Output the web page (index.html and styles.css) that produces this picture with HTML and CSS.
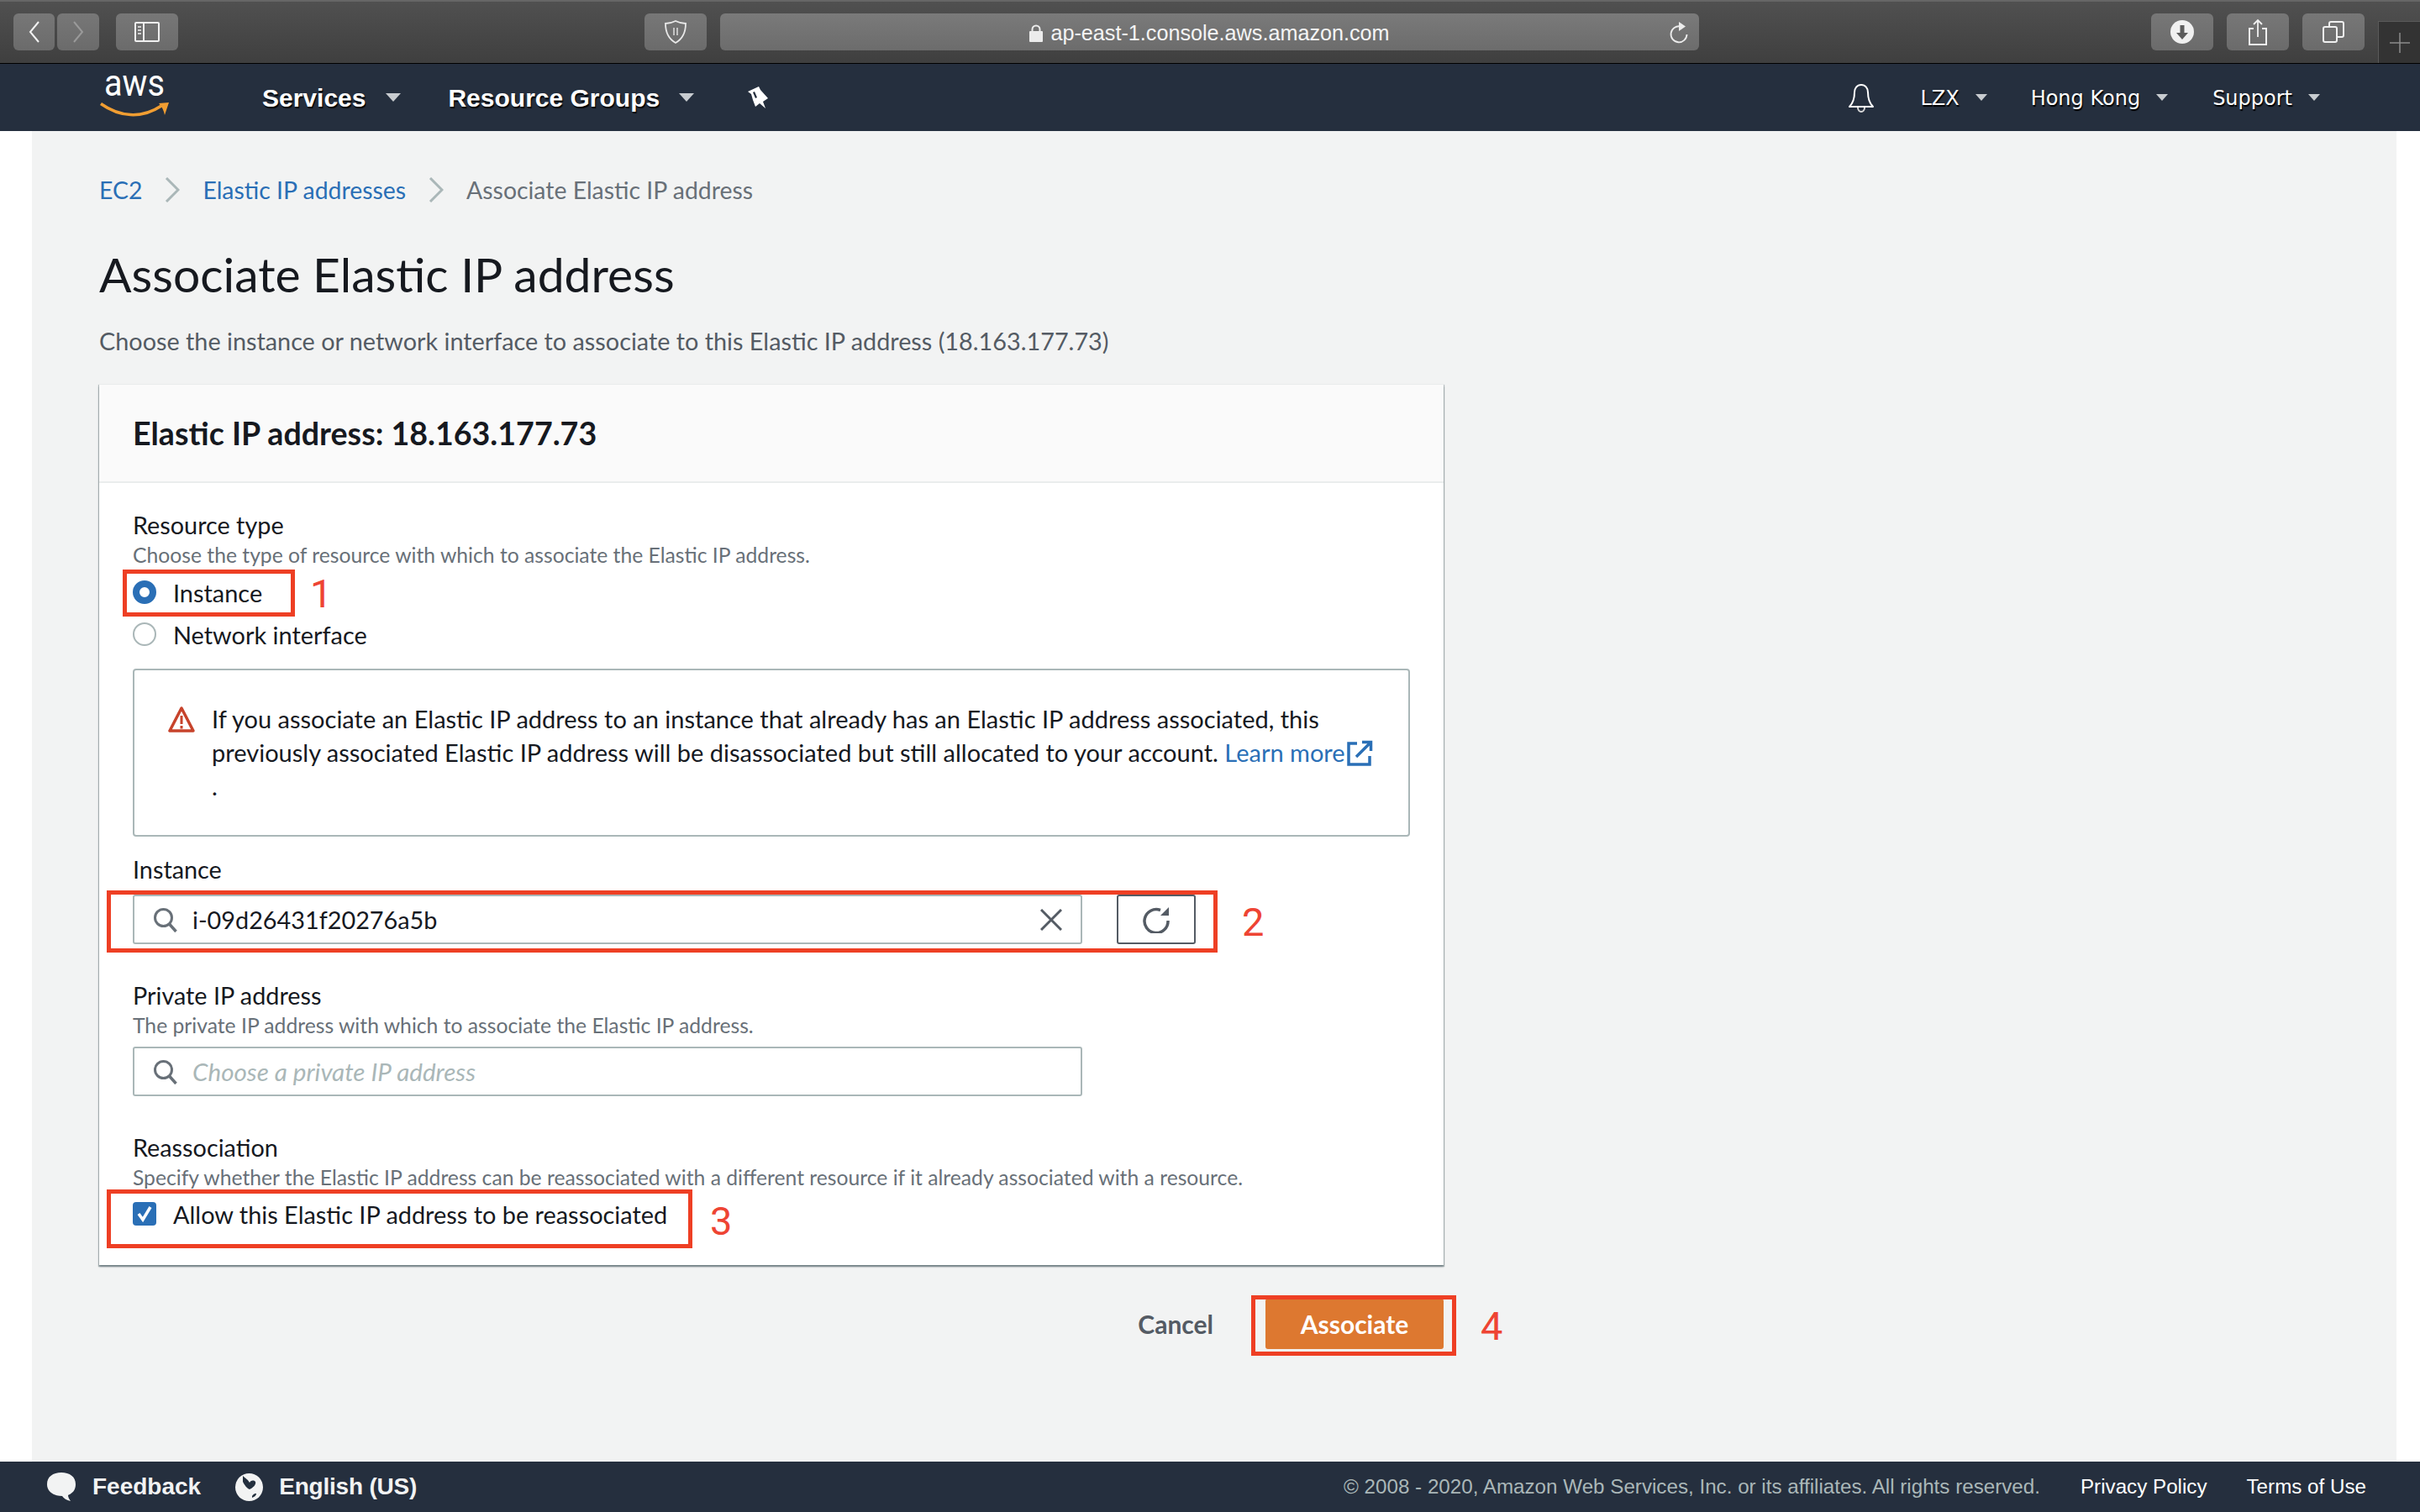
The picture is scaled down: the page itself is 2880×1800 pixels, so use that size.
FILE: index.html
```html
<!DOCTYPE html>
<html lang="en">
<head>
<meta charset="utf-8">
<title>Associate Elastic IP address</title>
<link rel="stylesheet" href="styles.css">
</head>
<body>
<div class="page">
  <header class="chrome">
    <div class="tb back"><svg width="14" height="28" viewBox="0 0 14 28"><path d="M12 2 2 14l10 12" fill="none" stroke="#f2f2f2" stroke-width="2"/></svg></div>
    <div class="tb fwd"><svg width="14" height="28" viewBox="0 0 14 28"><path d="M2 2l10 12L2 26" fill="none" stroke="#9a9a9a" stroke-width="2"/></svg></div>
    <div class="tb side"><svg width="30" height="24" viewBox="0 0 30 24"><rect x="1" y="1" width="28" height="22" rx="1" fill="none" stroke="#f0f0f0" stroke-width="2"/><path d="M11 1v22" stroke="#f0f0f0" stroke-width="2"/><path d="M4 6h4M4 10h4M4 14h4" stroke="#d0d0d0" stroke-width="2"/></svg></div>
    <div class="tb shield"><svg width="30" height="30" viewBox="0 0 30 30"><path d="M15 2c4 2 8 3 12 3 0 10-3 18-12 23C6 23 3 15 3 5c4 0 8-1 12-3z" fill="none" stroke="#e8e8e8" stroke-width="1.8"/><path d="M13 10v9M17 10v9" stroke="#d8d8d8" stroke-width="1.6"/></svg></div>
    <div class="url">
      <span></span>
      <span class="url-text"><svg class="lock" width="16" height="21" viewBox="0 0 16 21"><path d="M3.500 9V6a4.500 4.500 0 0 1 9 0v3" fill="none" stroke="#ececec" stroke-width="2"/><rect y="8" width="16" height="13" rx="1" fill="#ececec"/></svg>ap-east-1.console.aws.amazon.com</span>
      <svg class="reload" width="24" height="26" viewBox="0 0 24 26"><path d="M14 5.500A9.500 9.500 0 1 0 21.500 15" fill="none" stroke="#ececec" stroke-width="1.800"/><path d="M12 0l8 5.500-8 5.500z" fill="#ececec"/></svg>
    </div>
    <div class="tb right first"><svg width="28" height="28" viewBox="0 0 28 28"><circle cx="14" cy="14" r="14" fill="#f0f0f0"/><path d="M11.500 6h5v9h4.500L14 23l-7-8h4.500z" fill="#5c5c5c"/></svg></div>
    <div class="tb right"><svg width="24" height="32" viewBox="0 0 24 32"><path d="M7 12H2v19h20V12h-5" fill="none" stroke="#f0f0f0" stroke-width="2"/><path d="M12 22V2M7 7l5-5 5 5" fill="none" stroke="#f0f0f0" stroke-width="1.800"/></svg></div>
    <div class="tb right"><svg width="26" height="26" viewBox="0 0 26 26"><rect x="1" y="7" width="16" height="18" rx="2" fill="none" stroke="#f0f0f0" stroke-width="2"/><path d="M8 7V3a2 2 0 0 1 2-2h13a2 2 0 0 1 2 2v14a2 2 0 0 1-2 2h-6" fill="none" stroke="#f0f0f0" stroke-width="2"/></svg></div>
    <div class="newtab"><svg width="24" height="24" viewBox="0 0 24 24"><path d="M12 0v24M0 12h24" stroke="#8c8c8c" stroke-width="1.500"/></svg></div>
  </header>

  <nav class="nav">
    <svg class="logo" width="80" height="48" viewBox="0 0 80 48">
      <text class="logo-text" x="4" y="22" textLength="72" lengthAdjust="spacingAndGlyphs">aws</text>
      <path d="M0 31.500C22 47 48 50 72 34" fill="none" stroke="#f19e32" stroke-width="3.500"/>
      <path d="M69 31l12-1-5 15c-1-5-3-10-7-14z" fill="#f19e32"/>
    </svg>
    <a class="nav-bold services">Services</a><i class="caret c1"></i>
    <a class="nav-bold groups">Resource Groups</a><i class="caret c2"></i>
    <svg class="pin" width="24" height="28" viewBox="0 0 24 28"><path fill-rule="evenodd" d="M0 7 13 1l2 4 9 10-6 4 3 8-7-6-5 4-3-8-2-7zM6 8l3 7 2-1-3-7z" fill="#fff"/></svg>
    <div class="nav-right">
      <svg class="bell" width="32" height="35" viewBox="0 0 32 35"><path d="M16 2c-5 0-8 4-8 9 0 7-1 12-6 17h28c-5-5-6-10-6-17 0-5-3-9-8-9z" fill="none" stroke="#fff" stroke-width="2" stroke-linejoin="round"/><path d="M12 29c0 3 2 5 4 5s4-2 4-5" fill="none" stroke="#d8d8d8" stroke-width="2"/></svg>
      <a class="nav-reg lzx">LZX</a><i class="caret small"></i>
      <a class="nav-reg hk">Hong Kong</a><i class="caret small"></i>
      <a class="nav-reg support">Support</a><i class="caret small"></i>
    </div>
  </nav>

  <main class="main">
    <div class="crumbs">
      <a class="link">EC2</a>
      <svg class="chev" width="18" height="30" viewBox="0 0 18 30"><path d="M2 1l14 14L2 29" fill="none" stroke="#aab7b8" stroke-width="3"/></svg>
      <a class="link">Elastic IP addresses</a>
      <svg class="chev" width="18" height="30" viewBox="0 0 18 30"><path d="M2 1l14 14L2 29" fill="none" stroke="#aab7b8" stroke-width="3"/></svg>
      <span class="crumb-current">Associate Elastic IP address</span>
    </div>
    <h1 class="title">Associate Elastic IP address</h1>
    <p class="subtitle">Choose the instance or network interface to associate to this Elastic IP address (18.163.177.73)</p>

    <section class="card">
      <h2 class="card-head">Elastic IP address: 18.163.177.73</h2>
      <div class="card-body">
        <div class="label">Resource type</div>
        <div class="desc">Choose the type of resource with which to associate the Elastic IP address.</div>
        <div class="choices">
          <div class="choice"><span class="radio on"></span>Instance</div>
          <div class="choice"><span class="radio"></span>Network interface</div>
        </div>
        <div class="alert">
          <svg class="warn" width="32" height="32" viewBox="0 0 32 32"><path d="M16 3 2 30h28z" fill="none" stroke="#c7432b" stroke-width="3.500" stroke-linejoin="round"/><path d="M16 12v10M16 24v3.500" stroke="#c7432b" stroke-width="3"/></svg>
          <p class="alert-text">If you associate an Elastic IP address to an instance that already has an Elastic IP address associated, this<br>previously associated Elastic IP address will be disassociated but still allocated to your account. <a class="link">Learn more</a><svg class="ext" width="32" height="32" viewBox="0 0 32 32"><path d="M13 4H3v25h25V19" fill="none" stroke="#2a6fb6" stroke-width="3.500"/><path d="M12 20 29 3M19 2.500h10.500V13" fill="none" stroke="#2a6fb6" stroke-width="3.500"/></svg><br>.</p>
        </div>

        <div class="label gap-a">Instance</div>
        <div class="input-row">
          <div class="input">
            <svg class="search" width="30" height="30" viewBox="0 0 30 30"><circle cx="12.500" cy="12.500" r="10" fill="none" stroke="#687078" stroke-width="3"/><path d="M19.500 20l8 9" stroke="#687078" stroke-width="3.500"/></svg>
            <span class="value">i-09d26431f20276a5b</span>
            <svg class="clear" width="26" height="26" viewBox="0 0 26 26"><path d="M1 1l24 24M25 1 1 25" stroke="#545b64" stroke-width="3"/></svg>
          </div>
          <div class="refresh"><svg width="32" height="32" viewBox="0 0 32 32"><path d="M21 4.500A14 14 0 1 0 30 17" fill="none" stroke="#545b64" stroke-width="3.500"/><path d="M31 1v10H21z" fill="#545b64"/></svg></div>
        </div>

        <div class="label gap-c">Private IP address</div>
        <div class="desc">The private IP address with which to associate the Elastic IP address.</div>
        <div class="input private">
          <svg class="search" width="30" height="30" viewBox="0 0 30 30"><circle cx="12.500" cy="12.500" r="10" fill="none" stroke="#687078" stroke-width="3"/><path d="M19.500 20l8 9" stroke="#687078" stroke-width="3.500"/></svg>
          <span class="placeholder">Choose a private IP address</span>
        </div>

        <div class="label gap-b">Reassociation</div>
        <div class="desc">Specify whether the Elastic IP address can be reassociated with a different resource if it already associated with a resource.</div>
        <div class="choice check-row"><span class="check"><svg width="20" height="20" viewBox="0 0 20 20"><path d="M3 10l5 7L17 2" fill="none" stroke="#fff" stroke-width="3.500"/></svg></span>Allow this Elastic IP address to be reassociated</div>
      </div>
    </section>

    <div class="actions">
      <a class="cancel">Cancel</a>
      <a class="primary">Associate</a>
    </div>
  </main>

  <footer class="footer">
    <svg class="fb-icon" width="34" height="34" viewBox="0 0 34 34"><path d="M17 0c10 0 17 5 17 14 0 7-4 11-9 13 0 2 1 4 3 7-5-1-8-3-10-6C8 28 0 23 0 14 0 5 7 0 17 0z" fill="#f2f3f3"/></svg>
    <span class="foot-bold feedback">Feedback</span>
    <svg class="globe" width="33" height="33" viewBox="0 0 33 33"><circle cx="16.500" cy="16.500" r="16.500" fill="#f2f3f3"/><path d="M9 3c3 3 6 4 8 8 2-3 5-3 7-1 1 3-2 6-5 8l-2 1c-3-1-6-5-8-9z" fill="#232f3e"/><path d="M20 27c1-2 3-3 5-3 0 2-2 4-5 5z" fill="#232f3e"/></svg>
    <span class="foot-bold english">English (US)</span>
    <span class="copy">© 2008 - 2020, Amazon Web Services, Inc. or its affiliates. All rights reserved.</span>
    <a class="foot-link privacy">Privacy Policy</a>
    <a class="foot-link terms">Terms of Use</a>
  </footer>

  <div class="mark m1"></div><span class="num n1">1</span>
  <div class="mark m2"></div><span class="num n2">2</span>
  <div class="mark m3"></div><span class="num n3">3</span>
  <div class="mark m4"></div><span class="num n4">4</span>
</div>
</body>
</html>
```

FILE: styles.css
```css
* { box-sizing: border-box; }
html, body { margin: 0; padding: 0; }
body { background: #fff; font-family: "Lato", "Noto Sans", sans-serif; color: #16191f; }
.page { position: relative; width: 2880px; height: 1800px; overflow: hidden; display: flex; flex-direction: column; }

/* browser toolbar */
.chrome { height: 76px; flex: none; display: flex; align-items: flex-start; padding: 14px 0 0 16px; position: relative;
  background: linear-gradient(#505050, #3f3f3f); border-top: 2px solid #666; border-bottom: 1px solid #000; }
.tb { height: 44px; border-radius: 6px; background: linear-gradient(#777, #6b6b6b); display: flex; align-items: center; justify-content: center; flex: none; }
.back { width: 49px; margin-right: 3px; }
.fwd { width: 50px; margin-right: 20px; }
.side { width: 74px; margin-right: 555px; }
.shield { width: 74px; margin-right: 16px; }
.url { width: 1165px; height: 44px; border-radius: 6px; background: linear-gradient(#7a7a7a, #6c6c6c); display: grid; grid-template-columns: 1fr auto 1fr; align-items: center; margin-right: 538px; flex: none; }
.url-text { font: 25.200px/44px "Liberation Sans", sans-serif; color: #f4f4f4; display: flex; align-items: center; padding-top: 1px; }
.lock { margin-right: 9px; }
.reload { justify-self: end; margin-right: 12px; }
.right { width: 74px; margin-right: 16px; }
.newtab { position: absolute; right: 0; top: 23px; width: 50px; height: 50px; background: #333; border-left: 1px solid #5a5a5a; border-top: 1px solid #5a5a5a; display: flex; align-items: center; justify-content: center; }

/* console nav */
.nav { height: 80px; flex: none; background: #252f3e; display: flex; align-items: center; color: #fff; padding-left: 120px; }
.logo { flex: none; overflow: visible; }
.logo-text { font: 400 44px "Roboto", sans-serif; fill: #fff; }
.nav-bold { font: 700 30px/40px "Liberation Sans", sans-serif; text-shadow: 1px 2px 1px #000; padding-top: 2px; }
.services { margin-left: 112px; }
.groups { margin-left: 56px; }
.caret { width: 0; height: 0; border-style: solid; border-width: 10px 9px 0; border-color: #c8ccd0 transparent transparent; flex: none; margin-left: 24px; }
.caret.c2 { margin-left: 23px; }
.caret.small { border-width: 8px 7px 0; margin-left: 19px; }
.pin { margin-left: 64px; flex: none; }
.nav-right { margin-left: auto; display: flex; align-items: center; padding-right: 119px; }
.nav-reg { font: 400 24px/40px "DejaVu Sans", sans-serif; text-shadow: 1px 2px 1px #000; padding-top: 2px; }
.lzx { margin-left: 54px; }
.hk { margin-left: 52px; }
.support { margin-left: 53px; }

/* content */
.main { flex: 1; margin: 0 28px 0 38px; padding: 0 0 0 80px; background: #f2f3f3; }
.link { color: #2a6fb6; }
.crumbs { height: 70px; margin-top: 35px; display: flex; align-items: center; font-size: 28.400px; }
.chev { margin: 0 27px; flex: none; }
.crumb-current { color: #687078; }
.title { margin: 30px 0 0; font-weight: 400; font-size: 57px; line-height: 70px; height: 70px; color: #16191f; }
.subtitle { margin: 25px 0 0; font-size: 28.800px; line-height: 40px; color: #545b64; }

.card { width: 1600px; height: 1048px; margin-top: 32px; background: #fff; box-shadow: 0 1px 1px 1px rgba(0, 28, 36, .22), 0 2px 2px rgba(0, 28, 36, .4); }
.card-head { margin: 0; height: 117px; padding-left: 40px; display: flex; align-items: center; background: #fafafa; border-bottom: 2px solid #eaeded; font-size: 37.600px; font-weight: 700; color: #16191f; }
.card-body { padding: 32px 40px 0; }
.label { font-size: 28.800px; line-height: 36px; color: #16191f; }
.desc { font-size: 24.700px; line-height: 34px; margin-top: 1px; color: #687078; }
.choices { margin-top: 2px; }
.choice { height: 50px; display: flex; align-items: center; font-size: 28.900px; color: #16191f; }
.radio { width: 28px; height: 28px; border-radius: 50%; border: 2px solid #aab7b8; background: #fff; margin-right: 20px; flex: none; }
.radio.on { border: 8px solid #2a6fb6; }
.alert { height: 200px; margin-top: 16px; border: 2px solid #aab7b8; border-radius: 4px; display: flex; align-items: flex-start; padding: 38px 0 0 40px; }
.warn { flex: none; margin-top: 4px; margin-right: 20px; }
.alert-text { margin: 0; font-size: 29px; line-height: 40px; color: #16191f; white-space: nowrap; }
.ext { vertical-align: -6px; margin-left: 1px; }
.gap-a { margin-top: 21px; }
.gap-b { margin-top: 43px; }
.gap-c { margin-top: 43px; }
.input-row { display: flex; margin-top: 12px; gap: 41px; }
.input { width: 1130px; height: 59px; border: 2px solid #aab7b8; border-radius: 3px; display: flex; align-items: center; padding: 0 22px; background: #fff; flex: none; }
.search { flex: none; margin-right: 17px; }
.value { font-size: 28.800px; color: #16191f; flex: 1; }
.clear { flex: none; }
.refresh { width: 94px; height: 59px; border: 2px solid #545b64; border-radius: 3px; display: flex; align-items: center; justify-content: center; background: #fff; flex: none; }
.private { margin-top: 8px; }
.placeholder { font-size: 29.600px; font-style: italic; color: #aab7b8; }
.check-row { margin-top: 1px; }
.check { width: 28px; height: 28px; border-radius: 4px; background: #2a6fb6; margin-right: 20px; display: flex; align-items: center; justify-content: center; flex: none; }

.actions { width: 1600px; display: flex; align-items: center; justify-content: flex-end; margin-top: 40px; }
.cancel { font-size: 30px; font-weight: 700; color: #545b64; margin-right: 62px; }
.primary { width: 212px; height: 60px; border-radius: 3px; background: #dd7830; color: #fff; font-size: 30px; font-weight: 700; display: flex; align-items: center; justify-content: center; }

/* footer */
.footer { height: 60px; flex: none; background: #252f3e; display: flex; align-items: center; padding-left: 56px; }
.fb-icon, .globe { flex: none; }
.foot-bold { font: 700 28px/40px "Liberation Sans", sans-serif; color: #f2f3f3; }
.feedback { margin-left: 20px; }
.globe { margin-left: 41px; }
.english { margin-left: 19px; }
.english { letter-spacing: -.2px; }
.copy { font: 400 24.200px/40px "Liberation Sans", sans-serif; color: #aab7b8; margin-left: auto; }
.foot-link { font: 400 24.200px/40px "Liberation Sans", sans-serif; color: #fff; }
.privacy { margin-left: 48px; }
.terms { margin-left: 47px; margin-right: 64px; }

/* annotation overlays */
.mark { position: absolute; border: 5px solid #ee3f24; }
.m1 { left: 146px; top: 678px; width: 205px; height: 56px; }
.m2 { left: 127px; top: 1060px; width: 1322px; height: 74px; }
.m3 { left: 127px; top: 1416px; width: 697px; height: 70px; }
.m4 { left: 1489px; top: 1542px; width: 244px; height: 72px; }
.num { position: absolute; font: 400 47px/48px "Roboto", sans-serif; color: #ee4433; }
.n1 { left: 369px; top: 683px; }
.n2 { left: 1478px; top: 1074px; }
.n3 { left: 845px; top: 1430px; }
.n4 { left: 1762px; top: 1555px; }
```
